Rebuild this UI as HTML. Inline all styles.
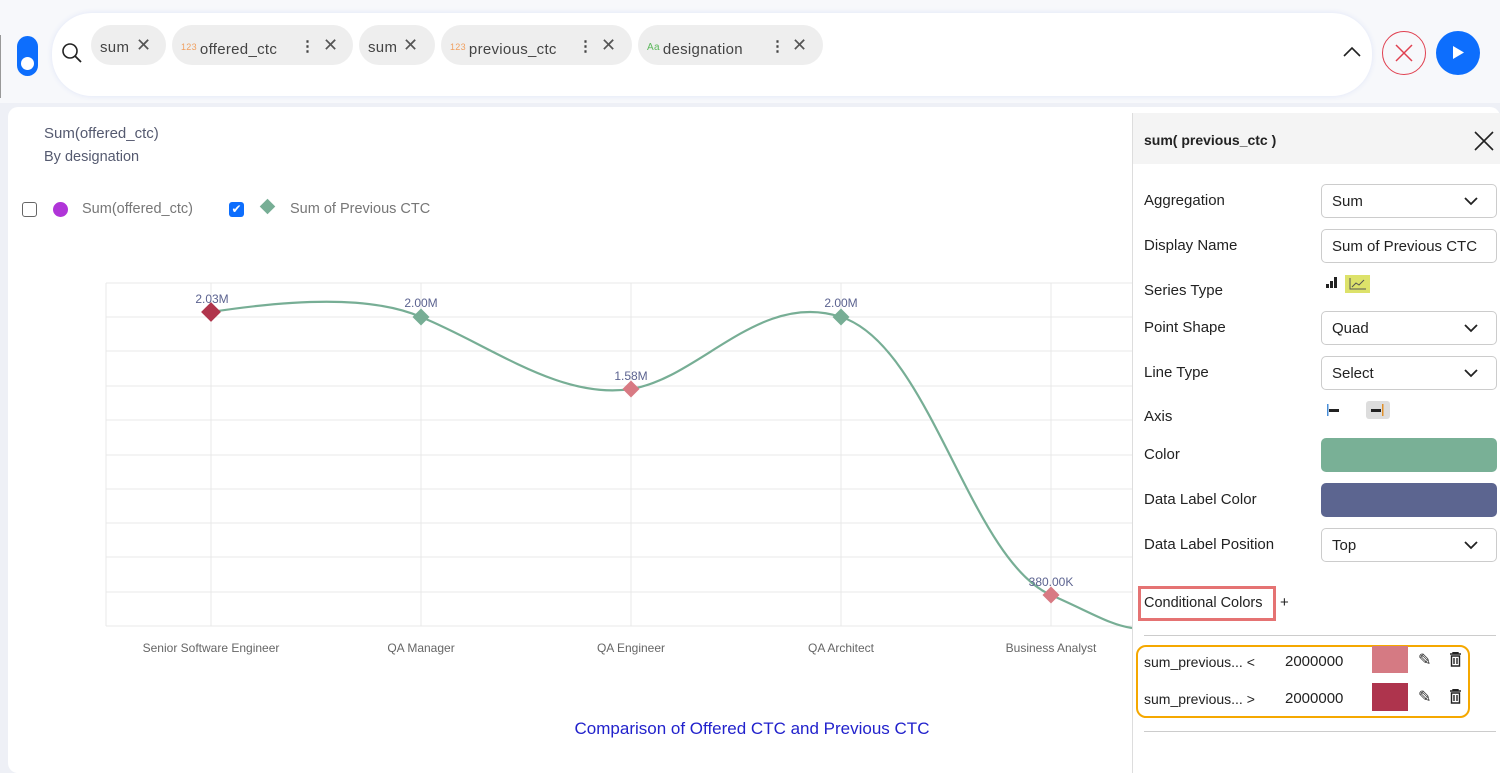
<!DOCTYPE html>
<html><head><meta charset="utf-8"><style>
*{box-sizing:border-box;margin:0;padding:0}
body{width:1500px;height:773px;background:#eef0f6;font-family:"Liberation Sans",sans-serif;position:relative;overflow:hidden;color:#333}
.top{position:absolute;left:0;top:0;width:1500px;height:103px;background:#f7f8fb}
.bar{position:absolute;left:52px;top:13px;width:1320px;height:83px;background:#fff;border-radius:40px;box-shadow:0 0 6px #dfe5f7}
.tog{position:absolute;left:17px;top:36px;width:21px;height:40px;border-radius:11px;background:#0d6efd}
.tog:after{content:"";position:absolute;left:4px;top:21px;width:13px;height:13px;border-radius:50%;background:#fff}
.chip{position:absolute;top:25px;height:40px;background:#eee;border-radius:20px;font-size:15px;color:#444;line-height:45px;padding-left:9px;letter-spacing:.3px}
.chip small{font-size:9px;color:#f0a060;vertical-align:4px;margin-right:3px}
.chip .x{position:absolute;top:-2px;font-size:18px;color:#555}
.chip .d{position:absolute;top:-1px;font-weight:bold}
.card{position:absolute;left:8px;top:107px;width:1492px;height:666px;background:#fff;border-radius:10px}
.panel{position:absolute;left:1132px;top:113px;width:368px;height:660px;background:#fff;border-left:1px solid #ddd;font-size:15px;color:#222}
.ph{height:51px;background:#f4f4f4;font-weight:bold;font-size:14px;line-height:55px;padding-left:11px}
.lbl{position:absolute;left:11px}
.sel{position:absolute;left:188px;width:176px;height:34px;border:1px solid #ccc;border-radius:5px;padding-left:10px;line-height:34px;font-size:15px}
.sel svg{position:absolute;right:18px;top:12px}
</style></head><body>
<div class="top"></div>
<div style="position:absolute;left:0;top:35px;width:1px;height:63px;background:#999"></div>
<div class="tog"></div>
<div class="bar"></div>
<svg style="position:absolute;left:61px;top:42px" width="22" height="22"><circle cx="9" cy="9" r="7" fill="none" stroke="#222" stroke-width="1.6"/><line x1="14" y1="14" x2="20" y2="20" stroke="#222" stroke-width="1.8"/></svg>
<div class="chip" style="left:91px;width:75px">sum<span class="x" style="left:45px">✕</span></div>
<div class="chip" style="left:172px;width:181px"><small>123</small>offered_ctc<span class="d" style="left:128px">⋮</span><span class="x" style="left:151px">✕</span></div>
<div class="chip" style="left:359px;width:76px">sum<span class="x" style="left:44px">✕</span></div>
<div class="chip" style="left:441px;width:191px"><small>123</small>previous_ctc<span class="d" style="left:137px">⋮</span><span class="x" style="left:160px">✕</span></div>
<div class="chip" style="left:638px;width:185px"><small style="color:#5cb85c;font-size:10px">Aa</small>designation<span class="d" style="left:132px">⋮</span><span class="x" style="left:154px">✕</span></div>
<svg style="position:absolute;left:1342px;top:45px" width="20" height="14"><polyline points="2,11 10,3 18,11" fill="none" stroke="#222" stroke-width="1.6"/></svg>
<div style="position:absolute;left:1382px;top:31px;width:44px;height:44px;border:1.5px solid #e04050;border-radius:50%"></div>
<svg style="position:absolute;left:1394px;top:43px" width="20" height="20"><path d="M2 2L18 18M18 2L2 18" stroke="#e04050" stroke-width="1.5"/></svg>
<div style="position:absolute;left:1436px;top:31px;width:44px;height:44px;background:#0d6efd;border-radius:50%"></div>
<svg style="position:absolute;left:1452px;top:45px" width="14" height="16"><path d="M1 1L12 7.5L1 14Z" fill="#fff"/></svg>

<div class="card"></div>
<div style="position:absolute;left:44px;top:125px;font-size:15px;color:#555a70">Sum(offered_ctc)</div>
<div style="position:absolute;left:44px;top:149px;font-size:14.5px;color:#555a70">By designation</div>
<div style="position:absolute;left:22px;top:202px;width:15px;height:15px;border:1.5px solid #666;border-radius:3px"></div>
<div style="position:absolute;left:53px;top:202px;width:15px;height:15px;background:#b035d8;border-radius:50%"></div>
<div style="position:absolute;left:82px;top:201px;font-size:14.5px;color:#777">Sum(offered_ctc)</div>
<div style="position:absolute;left:229px;top:202px;width:15px;height:15px;background:#0d6efd;border-radius:3px;color:#fff;font-size:12px;line-height:15px;text-align:center">✔</div>
<div style="position:absolute;left:262px;top:201px;width:11px;height:11px;background:#77ae95;transform:rotate(45deg)"></div>
<div style="position:absolute;left:290px;top:201px;font-size:14.5px;color:#777">Sum of Previous CTC</div>

<svg style="position:absolute;left:0;top:0" width="1132" height="773">
<g stroke="#e8e8e8" stroke-width="1">
<line x1="106" y1="283" x2="1132" y2="283"/><line x1="106" y1="317" x2="1132" y2="317"/><line x1="106" y1="351" x2="1132" y2="351"/><line x1="106" y1="386" x2="1132" y2="386"/><line x1="106" y1="420" x2="1132" y2="420"/><line x1="106" y1="455" x2="1132" y2="455"/><line x1="106" y1="489" x2="1132" y2="489"/><line x1="106" y1="523" x2="1132" y2="523"/><line x1="106" y1="557" x2="1132" y2="557"/><line x1="106" y1="592" x2="1132" y2="592"/><line x1="106" y1="626" x2="1132" y2="626"/>
<line x1="106" y1="283" x2="106" y2="626"/><line x1="211" y1="283" x2="211" y2="626"/><line x1="421" y1="283" x2="421" y2="626"/><line x1="631" y1="283" x2="631" y2="626"/><line x1="841" y1="283" x2="841" y2="626"/><line x1="1051" y1="283" x2="1051" y2="626"/>
</g>
<path d="M211 312 C290 300 370 295 421 317 C490 345 560 400 631 389 C700 378 760 290 841 317 C930 345 970 560 1051 595 C1090 612 1110 625 1132 628" fill="none" stroke="#77ae95" stroke-width="2.2"/>
<g font-size="12" fill="#5c6390" font-family="Liberation Sans" text-anchor="middle">
<text x="212" y="303">2.03M</text><text x="421" y="307">2.00M</text><text x="631" y="380">1.58M</text><text x="841" y="307">2.00M</text><text x="1051" y="586">380.00K</text></g>
<rect x="204" y="305" width="14" height="14" fill="#b0354c" transform="rotate(45 211 312)"/>
<rect x="415" y="311" width="12" height="12" fill="#77ae95" transform="rotate(45 421 317)"/>
<rect x="625" y="383" width="12" height="12" fill="#d87a83" transform="rotate(45 631 389)"/>
<rect x="835" y="311" width="12" height="12" fill="#77ae95" transform="rotate(45 841 317)"/>
<rect x="1045" y="589" width="12" height="12" fill="#d87a83" transform="rotate(45 1051 595)"/>
<g font-size="12" fill="#666" text-anchor="middle" font-family="Liberation Sans">
<text x="211" y="652">Senior Software Engineer</text><text x="421" y="652">QA Manager</text><text x="631" y="652">QA Engineer</text><text x="841" y="652">QA Architect</text><text x="1051" y="652">Business Analyst</text></g>
<text x="752" y="734" font-size="17" fill="#2222cc" text-anchor="middle" font-family="Liberation Sans">Comparison of Offered CTC and Previous CTC</text>
</svg>

<div class="panel">
<div class="ph">sum( previous_ctc )<svg style="position:absolute;right:5px;top:17px" width="22" height="22"><path d="M2 2L20 20M20 2L2 20" stroke="#222" stroke-width="1.6"/></svg></div>
<div class="lbl" style="top:79px">Aggregation</div>
<div class="sel" style="top:71px">Sum<svg width="14" height="9"><polyline points="1,1 7,7 13,1" fill="none" stroke="#222" stroke-width="1.8"/></svg></div>
<div class="lbl" style="top:124px">Display Name</div>
<div class="sel" style="top:116px">Sum of Previous CTC</div>
<div class="lbl" style="top:169px">Series Type</div>
<svg style="position:absolute;left:193px;top:163px" width="14" height="14"><rect x="0" y="8" width="3" height="4" fill="#222"/><rect x="4" y="5" width="3" height="7" fill="#222"/><rect x="8" y="1" width="3" height="11" fill="#222"/></svg>
<div style="position:absolute;left:212px;top:162px;width:25px;height:18px;background:#dde26a"></div>
<svg style="position:absolute;left:216px;top:164px" width="18" height="14"><path d="M1 1V12H17M3 10L7 6L10 8L15 3" fill="none" stroke="#555" stroke-width="1"/></svg>
<div class="lbl" style="top:206px">Point Shape</div>
<div class="sel" style="top:198px">Quad<svg width="14" height="9"><polyline points="1,1 7,7 13,1" fill="none" stroke="#222" stroke-width="1.8"/></svg></div>
<div class="lbl" style="top:251px">Line Type</div>
<div class="sel" style="top:243px">Select<svg width="14" height="9"><polyline points="1,1 7,7 13,1" fill="none" stroke="#222" stroke-width="1.8"/></svg></div>
<div class="lbl" style="top:295px">Axis</div>
<svg style="position:absolute;left:194px;top:290px" width="14" height="14"><rect x="0" y="1" width="1.5" height="12" fill="#4a8fd8"/><rect x="2" y="6" width="10" height="3" fill="#222"/></svg>
<div style="position:absolute;left:233px;top:288px;width:24px;height:18px;background:#ddd;border-radius:3px"></div>
<svg style="position:absolute;left:238px;top:290px" width="14" height="14"><rect x="0" y="6" width="10" height="3" fill="#222"/><rect x="11" y="1" width="1.5" height="12" fill="#e0902a"/></svg>
<div class="lbl" style="top:333px">Color</div>
<div style="position:absolute;left:188px;top:325px;width:176px;height:34px;background:#79b096;border-radius:5px"></div>
<div class="lbl" style="top:378px">Data Label Color</div>
<div style="position:absolute;left:188px;top:370px;width:176px;height:34px;background:#5c6590;border-radius:5px"></div>
<div class="lbl" style="top:423px">Data Label Position</div>
<div class="sel" style="top:415px">Top<svg width="14" height="9"><polyline points="1,1 7,7 13,1" fill="none" stroke="#222" stroke-width="1.8"/></svg></div>
<div style="position:absolute;left:5px;top:473px;width:138px;height:35px;border:3px solid #e57373;padding-left:3px;line-height:29px;font-size:14.5px">Conditional Colors</div>
<div class="lbl" style="left:147px;top:481px">+</div>
<div style="position:absolute;left:11px;top:522px;width:352px;height:1px;background:#ccc"></div>
<div style="position:absolute;left:3px;top:532px;width:334px;height:73px;border:2px solid #f5a800;border-radius:10px"></div>
<div class="lbl" style="top:541px;font-size:14px">sum_previous... &lt;</div><div class="lbl" style="left:152px;top:540px">2000000</div>
<div style="position:absolute;left:239px;top:533px;width:36px;height:27px;background:#d57a83"></div>
<div class="lbl" style="top:578px;font-size:14px">sum_previous... &gt;</div><div class="lbl" style="left:152px;top:577px">2000000</div>
<div style="position:absolute;left:239px;top:570px;width:36px;height:28px;background:#ae344d"></div>
<div class="lbl" style="left:285px;top:537px;font-size:16px">✎</div><div class="lbl" style="left:285px;top:574px;font-size:16px">✎</div>
<svg style="position:absolute;left:316px;top:539px" width="13" height="15"><path d="M1 2H12M4 2V0.5H9V2M2.5 4H10.5V14H2.5ZM5 6V12M8 6V12" fill="none" stroke="#222" stroke-width="1.4"/></svg>
<svg style="position:absolute;left:316px;top:576px" width="13" height="15"><path d="M1 2H12M4 2V0.5H9V2M2.5 4H10.5V14H2.5ZM5 6V12M8 6V12" fill="none" stroke="#222" stroke-width="1.4"/></svg>
<div style="position:absolute;left:11px;top:618px;width:352px;height:1px;background:#ccc"></div>
</div>
</body></html>
